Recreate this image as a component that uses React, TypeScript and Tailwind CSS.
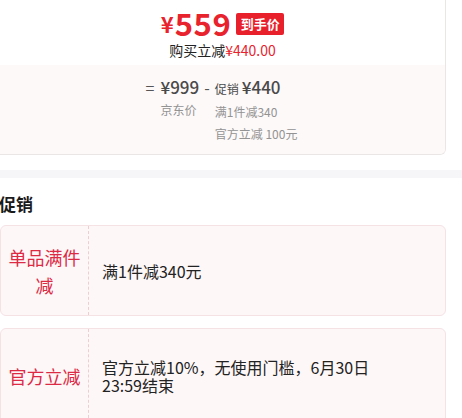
import React from "react";

const font = { fontFamily: '"Noto Sans CJK SC", "Noto Sans", sans-serif' };

function PromoCard({ label, children, h }: { label: React.ReactNode; children: React.ReactNode; h: string }) {
  return (
    <div className={`flex w-[446px] ${h} rounded-[6px] border border-[#f5e2e5] bg-[#fef7f8]`}>
      <div className="flex w-[88px] shrink-0 items-center justify-center border-r border-dashed border-[#ecced3] px-[2px] text-center text-[18px] leading-[28px] text-[#dc2a44]">
        {label}
      </div>
      <div className="flex flex-1 items-center pl-[13px] pr-4 text-[16px] leading-[18px] text-[#222]">{children}</div>
    </div>
  );
}

export default function App() {
  return (
    <div className="relative h-[418px] w-[462px] overflow-hidden bg-white" style={font}>
      {/* top card */}
      <div className="w-[446px] overflow-hidden rounded-br-[6px] border-b border-r border-[#ebe6e6]">
        <div className="flex h-[65px] flex-col items-center bg-white">
          <div className="mt-[8px] flex h-[28px] items-center">
            <span className="mt-[2px] text-[22px] font-bold leading-none text-[#e8232e]">¥</span>
            <span className="ml-[1px] text-[31px] font-bold leading-none tracking-[0.5px] text-[#e8232e]">559</span>
            <span className="ml-[5px] mt-[3px] flex h-[22px] w-[48px] items-center justify-center rounded-[2px] bg-[#e8202c] text-[13px] font-bold leading-none text-white">
              到手价
            </span>
          </div>
          <div className="mt-[5px] text-[14px] leading-[18px] text-[#222]">
            购买立减<span className="text-[#e8232e]">¥440.00</span>
          </div>
        </div>
        <div className="flex h-[89px] justify-center bg-[#fdf9f9] pt-[10px] text-[#4a4a4a]">
          <div className="ml-[-2px] flex items-start">
            <span className="text-[16px] leading-[24px] text-[#555]">=</span>
            <div className="ml-[6px] flex flex-col items-start">
              <span className="text-[17px] font-medium leading-[24px]">¥999</span>
              <span className="text-[12px] leading-[22px] text-[#939393]">京东价</span>
            </div>
            <span className="mx-[5px] text-[16px] leading-[24px] text-[#555]">-</span>
            <div className="flex flex-col items-start">
              <span className="leading-[24px]">
                <span className="text-[12px]">促销</span>
                <span className="ml-[3px] text-[17px] font-medium">¥440</span>
              </span>
              <span className="text-[12px] leading-[22px] text-[#939393]">满1件减340</span>
              <span className="text-[12px] leading-[22px] text-[#939393]">官方立减 100元</span>
            </div>
          </div>
        </div>
      </div>

      <div className="mt-[15px] h-[8px] bg-[#f6f6f9]" />

      <div className="-ml-[1px] mt-[16px] text-[17px] font-bold leading-[20px] text-[#1a1a1a]">促销</div>

      <div className="mt-[11px] flex flex-col gap-[12px]">
        <PromoCard label={<>单品满件<br />减</>} h="h-[91px]">
          满1件减340元
        </PromoCard>
        <PromoCard label="官方立减" h="h-[96px]">
          <span>
            官方立减10%，无使用门槛，6月30日
            <br />
            23:59结束
          </span>
        </PromoCard>
      </div>
    </div>
  );
}
